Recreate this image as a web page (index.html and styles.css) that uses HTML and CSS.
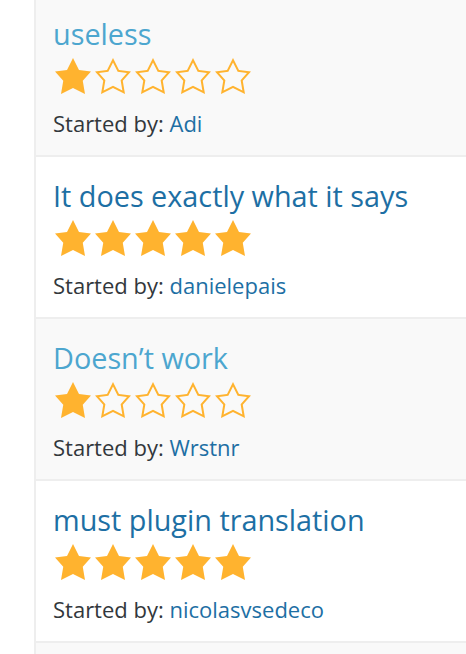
FILE: index.html
```html
<!DOCTYPE html>
<html lang="en">
<head>
<meta charset="utf-8">
<link rel="stylesheet" href="styles.css">
</head>
<body>
<div class="page">
  <ul class="topics">
    <li class="topic odd">
      <a class="title visited" href="#">useless</a>
      <div class="stars" aria-label="1 out of 5 stars">
        <svg class="star" viewBox="0 0 20 20"><path class="full" d="M10 1l3 6 6 .75-4.12 4.62L16 19l-6-3-6 3 1.13-6.63L1 7.75 7 7z"/></svg>
        <svg class="star" viewBox="0 0 20 20"><path class="full" d="M10 1L7 7l-6 .75 4.13 4.62L4 19l6-3 6 3-1.12-6.63L19 7.75 13 7zm0 2.24l2.34 4.69 4.65.58-3.18 3.56.87 5.15L10 14.88l-4.68 2.34.87-5.15-3.18-3.56 4.65-.58z"/></svg>
        <svg class="star" viewBox="0 0 20 20"><path class="full" d="M10 1L7 7l-6 .75 4.13 4.62L4 19l6-3 6 3-1.12-6.63L19 7.75 13 7zm0 2.24l2.34 4.69 4.65.58-3.18 3.56.87 5.15L10 14.88l-4.68 2.34.87-5.15-3.18-3.56 4.65-.58z"/></svg>
        <svg class="star" viewBox="0 0 20 20"><path class="full" d="M10 1L7 7l-6 .75 4.13 4.62L4 19l6-3 6 3-1.12-6.63L19 7.75 13 7zm0 2.24l2.34 4.69 4.65.58-3.18 3.56.87 5.15L10 14.88l-4.68 2.34.87-5.15-3.18-3.56 4.65-.58z"/></svg>
        <svg class="star" viewBox="0 0 20 20"><path class="full" d="M10 1L7 7l-6 .75 4.13 4.62L4 19l6-3 6 3-1.12-6.63L19 7.75 13 7zm0 2.24l2.34 4.69 4.65.58-3.18 3.56.87 5.15L10 14.88l-4.68 2.34.87-5.15-3.18-3.56 4.65-.58z"/></svg>
      </div>
      <p class="meta">Started by: <a href="#">Adi</a></p>
    </li>
    <li class="topic even">
      <a class="title" href="#">It does exactly what it says</a>
      <div class="stars" aria-label="5 out of 5 stars">
        <svg class="star" viewBox="0 0 20 20"><path class="full" d="M10 1l3 6 6 .75-4.12 4.62L16 19l-6-3-6 3 1.13-6.63L1 7.75 7 7z"/></svg>
        <svg class="star" viewBox="0 0 20 20"><path class="full" d="M10 1l3 6 6 .75-4.12 4.62L16 19l-6-3-6 3 1.13-6.63L1 7.75 7 7z"/></svg>
        <svg class="star" viewBox="0 0 20 20"><path class="full" d="M10 1l3 6 6 .75-4.12 4.62L16 19l-6-3-6 3 1.13-6.63L1 7.75 7 7z"/></svg>
        <svg class="star" viewBox="0 0 20 20"><path class="full" d="M10 1l3 6 6 .75-4.12 4.62L16 19l-6-3-6 3 1.13-6.63L1 7.75 7 7z"/></svg>
        <svg class="star" viewBox="0 0 20 20"><path class="full" d="M10 1l3 6 6 .75-4.12 4.62L16 19l-6-3-6 3 1.13-6.63L1 7.75 7 7z"/></svg>
      </div>
      <p class="meta">Started by: <a href="#">danielepais</a></p>
    </li>
    <li class="topic odd">
      <a class="title visited" href="#">Doesn’t work</a>
      <div class="stars" aria-label="1 out of 5 stars">
        <svg class="star" viewBox="0 0 20 20"><path class="full" d="M10 1l3 6 6 .75-4.12 4.62L16 19l-6-3-6 3 1.13-6.63L1 7.75 7 7z"/></svg>
        <svg class="star" viewBox="0 0 20 20"><path class="full" d="M10 1L7 7l-6 .75 4.13 4.62L4 19l6-3 6 3-1.12-6.63L19 7.75 13 7zm0 2.24l2.34 4.69 4.65.58-3.18 3.56.87 5.15L10 14.88l-4.68 2.34.87-5.15-3.18-3.56 4.65-.58z"/></svg>
        <svg class="star" viewBox="0 0 20 20"><path class="full" d="M10 1L7 7l-6 .75 4.13 4.62L4 19l6-3 6 3-1.12-6.63L19 7.75 13 7zm0 2.24l2.34 4.69 4.65.58-3.18 3.56.87 5.15L10 14.88l-4.68 2.34.87-5.15-3.18-3.56 4.65-.58z"/></svg>
        <svg class="star" viewBox="0 0 20 20"><path class="full" d="M10 1L7 7l-6 .75 4.13 4.62L4 19l6-3 6 3-1.12-6.63L19 7.75 13 7zm0 2.24l2.34 4.69 4.65.58-3.18 3.56.87 5.15L10 14.88l-4.68 2.34.87-5.15-3.18-3.56 4.65-.58z"/></svg>
        <svg class="star" viewBox="0 0 20 20"><path class="full" d="M10 1L7 7l-6 .75 4.13 4.62L4 19l6-3 6 3-1.12-6.63L19 7.75 13 7zm0 2.24l2.34 4.69 4.65.58-3.18 3.56.87 5.15L10 14.88l-4.68 2.34.87-5.15-3.18-3.56 4.65-.58z"/></svg>
      </div>
      <p class="meta">Started by: <a href="#">Wrstnr</a></p>
    </li>
    <li class="topic even">
      <a class="title" href="#">must plugin translation</a>
      <div class="stars" aria-label="5 out of 5 stars">
        <svg class="star" viewBox="0 0 20 20"><path class="full" d="M10 1l3 6 6 .75-4.12 4.62L16 19l-6-3-6 3 1.13-6.63L1 7.75 7 7z"/></svg>
        <svg class="star" viewBox="0 0 20 20"><path class="full" d="M10 1l3 6 6 .75-4.12 4.62L16 19l-6-3-6 3 1.13-6.63L1 7.75 7 7z"/></svg>
        <svg class="star" viewBox="0 0 20 20"><path class="full" d="M10 1l3 6 6 .75-4.12 4.62L16 19l-6-3-6 3 1.13-6.63L1 7.75 7 7z"/></svg>
        <svg class="star" viewBox="0 0 20 20"><path class="full" d="M10 1l3 6 6 .75-4.12 4.62L16 19l-6-3-6 3 1.13-6.63L1 7.75 7 7z"/></svg>
        <svg class="star" viewBox="0 0 20 20"><path class="full" d="M10 1l3 6 6 .75-4.12 4.62L16 19l-6-3-6 3 1.13-6.63L1 7.75 7 7z"/></svg>
      </div>
      <p class="meta">Started by: <a href="#">nicolasvsedeco</a></p>
    </li>
    <li class="topic odd"></li>
  </ul>
</div>
</body>
</html>
```

FILE: styles.css
```css
* { box-sizing: border-box; }
html, body { margin: 0; padding: 0; background: #fff; }
body {
  font-family: "Open Sans", "Noto Sans", sans-serif;
  color: #32373c;
  overflow: hidden;
  height: 654px;
}
.page {
  padding-left: 34px;
}
.topics {
  list-style: none;
  margin: -5px 0 0 0;
  padding: 0;
  border-left: 2px solid #eee;
}
.topic {
  display: flex;
  flex-direction: column;
  align-items: flex-start;
  height: 162px;
  padding: 21px 17px 0;
  border-bottom: 2px solid #eee;
}
.topic.odd { background: #f9f9f9; }
.topic.even { background: #fff; }
.title {
  font-size: 28.8px;
  line-height: 36px;
  color: #1d6fa4;
  text-decoration: none;
}
.title.visited { color: #4ca6cf; }
.stars {
  display: flex;
  margin-top: 4px;
  height: 40px;
}
.star {
  width: 40px;
  height: 40px;
  display: block;
}
.star .full { fill: #ffb32f; }
.meta {
  margin: 11.5px 0 0;
  font-size: 22px;
  line-height: 30px;
}
.meta a {
  color: #1d6fa4;
  text-decoration: none;
}
```
